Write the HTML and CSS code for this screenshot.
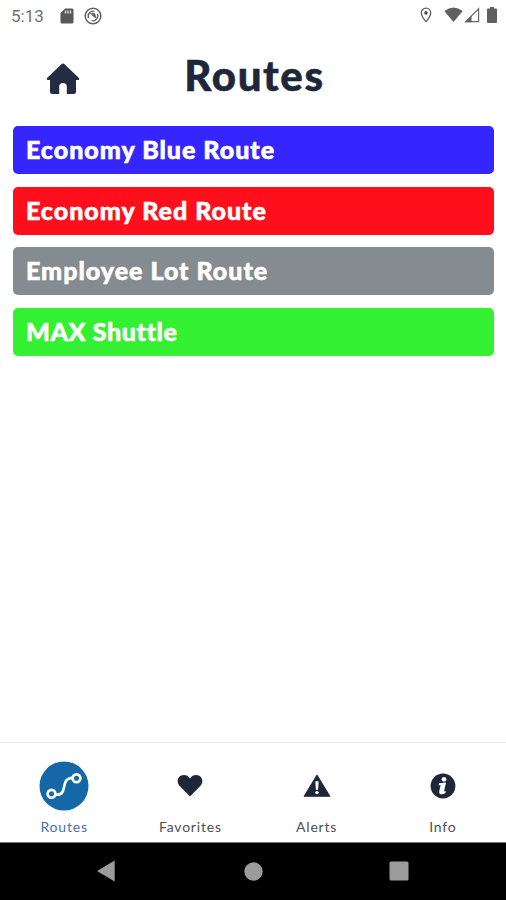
FILE: index.html
```html
<!DOCTYPE html>
<html lang="en">
<head>
    <meta charset="UTF-8">
    <meta name="viewport" content="width=device-width, initial-scale=1.0">
    <title>Routes</title>
    <link rel="stylesheet" href="styles.css">
</head>
<body>
    <!-- Status bar -->
    <div class="status-bar">
        <span class="clock">5:13</span>
        <svg class="sd-icon" width="14" height="16" viewBox="0 0 14 16">
            <path d="M5 0.5H12Q13.5 0.5 13.5 2V14Q13.5 15.5 12 15.5H2Q0.5 15.5 0.5 14V5Z" fill="#585858"/>
            <path d="M5.5 2.5V5.5M8 2.5V5.5M10.5 2.5V5.5" stroke="#ddd" stroke-width="1.4"/>
        </svg>
        <svg class="sync-icon" width="18" height="18" viewBox="0 0 18 18" fill="none" stroke="#606060">
            <circle cx="9" cy="9" r="7.8" stroke-width="1.5"/>
            <path d="M4.6 11A4.8 4.8 0 0 1 10.5 4.5M13.4 7A4.8 4.8 0 0 1 7.5 13.5" stroke-width="1.3"/>
            <path d="M6.2 6.2H10.6L12.4 11.6L9.6 9.4Z" fill="#606060" stroke-width="0.6"/>
        </svg>
        <div class="status-right">
            <svg width="12" height="16" viewBox="0 0 12 16">
                <path d="M6 1.2A4.7 4.7 0 0 0 1.3 5.9C1.3 9 6 14.6 6 14.6S10.7 9 10.7 5.9A4.7 4.7 0 0 0 6 1.2Z" fill="none" stroke="#606060" stroke-width="1.3"/>
                <circle cx="6" cy="5.9" r="1.8" fill="#505050"/>
            </svg>
            <svg class="wifi-icon" width="19" height="16" viewBox="0 0 19 16">
                <path d="M0.3 4Q9.5 -3 18.7 4L9.5 15Z" fill="#606060"/>
            </svg>
            <svg class="signal-icon" width="16" height="16" viewBox="0 0 16 16">
                <path d="M1.8 14.6L14.6 1.8V14.6Z" fill="none" stroke="#686868" stroke-width="1.2"/>
                <path d="M0.8 15.2L7.5 8.5V15.2Z" fill="#606060"/>
            </svg>
            <svg class="battery-icon" width="10" height="16" viewBox="0 0 10 16">
                <path d="M3 0H7V1.6H9Q10 1.6 10 2.6V15Q10 16 9 16H1Q0 16 0 15V2.6Q0 1.6 1 1.6H3Z" fill="#606060"/>
            </svg>
        </div>
    </div>

    <header>
        <svg class="home-icon" width="34" height="32" viewBox="0 0 34 32">
            <path d="M16 0.8Q17 0 18 0.8L33 15Q34 16.4 32.4 17H30V28.5Q30 31 27.5 31H20.8V23.5Q20.8 20 17 20T13.2 23.5V31H6.5Q4 31 4 28.5V17H1.6Q0 16.4 1 15Z" fill="#242c42"/>
        </svg>
        <h1>Routes</h1>
    </header>

    <main class="routes">
        <a class="route blue">Economy Blue Route</a>
        <a class="route red">Economy Red Route</a>
        <a class="route gray">Employee Lot Route</a>
        <a class="route green">MAX Shuttle</a>
    </main>

    <!-- Bottom tabs -->
    <nav class="tabs">
        <a class="tab active">
            <span class="tab-icon">
                <svg width="50" height="50" viewBox="0 0 50 50">
                    <circle cx="25" cy="25" r="24.5" fill="#1468a5"/>
                    <g fill="none" stroke="#fff" stroke-width="2.7">
                        <circle cx="12.5" cy="32.7" r="3.9"/>
                        <circle cx="37.5" cy="17.3" r="3.9"/>
                        <path d="M16.4 33.3C23 34.5 24 31 25 26.5C26.2 20.5 27 17 33.6 16.8"/>
                    </g>
                </svg>
            </span>
            <span class="tab-label">Routes</span>
        </a>
        <a class="tab">
            <span class="tab-icon">
                <svg width="26" height="24" viewBox="0 0 26 24">
                    <path d="M13 22.5L2.5 11.8C-1.5 7 1.5 1 6.7 1C9.5 1 11.6 2.2 13 4.4C14.4 2.2 16.5 1 19.3 1C24.5 1 27.5 7 23.5 11.8Z" fill="#1e263a"/>
                </svg>
            </span>
            <span class="tab-label">Favorites</span>
        </a>
        <a class="tab">
            <span class="tab-icon">
                <svg width="28" height="24" viewBox="0 0 28 24">
                    <path d="M14 1.2L26.7 22.2H1.3Z" fill="#1e263a" stroke="#1e263a" stroke-width="1.2" stroke-linejoin="round"/>
                    <path d="M12.3 7.2H15.7L15.1 15.8H12.9Z" fill="#fff"/>
                    <circle cx="14" cy="18.6" r="1.7" fill="#fff"/>
                </svg>
            </span>
            <span class="tab-label">Alerts</span>
        </a>
        <a class="tab">
            <span class="tab-icon">
                <svg width="26" height="26" viewBox="0 0 26 26">
                    <circle cx="13" cy="13" r="12.4" fill="#1e263a"/>
                    <circle cx="14" cy="6.3" r="2.4" fill="#fff"/>
                    <path d="M9 10.3L16 9.5L14 18.4L15.9 18.1L15.4 20Q12.6 21.9 10 21Q8.8 20 9.3 18L10.6 12.3L8.7 12.2Z" fill="#fff"/>
                </svg>
            </span>
            <span class="tab-label">Info</span>
        </a>
    </nav>

    <!-- Android system buttons -->
    <div class="system-nav">
        <svg width="20" height="22" viewBox="0 0 20 22"><path d="M0 11L17.7 0.5V21.5Z" fill="#9b9b9b"/></svg>
        <svg width="19" height="19" viewBox="0 0 19 19"><circle cx="9.5" cy="9.5" r="9.2" fill="#9b9b9b"/></svg>
        <svg width="20" height="20" viewBox="0 0 20 20"><rect x="0.5" y="0.5" width="19" height="19" rx="1.5" fill="#9b9b9b"/></svg>
    </div>
</body>
</html>
```
FILE: styles.css
```css
html, body {
    margin: 0;
    padding: 0;
    height: 100%;
    overflow: hidden;
}

body {
    display: flex;
    flex-direction: column;
    background-color: #fff;
    color: #1e263a;
    font-family: Lato, sans-serif;
}

svg {
    display: block;
    flex-shrink: 0;
}

/* Status bar */
.status-bar {
    display: flex;
    align-items: center;
    height: 31px;
    padding: 0 9px 0 11px;
}

.clock {
    width: 49px;
    font-family: Roboto, sans-serif;
    font-size: 17px;
    color: #707070;
}

.sync-icon {
    margin-left: 10px;
}

.status-right {
    display: flex;
    align-items: center;
    margin-left: auto;
    padding-bottom: 1px;
}

.wifi-icon {
    margin-left: 12px;
}

.signal-icon {
    margin-left: 1px;
}

.battery-icon {
    margin-left: 7px;
}

/* Title row */
header {
    display: grid;
    grid-template-columns: 1fr auto 1fr;
    align-items: center;
    height: 95px;
}

.home-icon {
    margin-left: 46px;
}

h1 {
    margin: 0;
    padding: 0 0 7px 3px;
    font-size: 42px;
    font-weight: 900;
    line-height: 1;
    letter-spacing: 1.6px;
    -webkit-text-stroke: 0.5px #1e263a;
}

/* Route list */
.routes {
    flex: 1;
    display: flex;
    flex-direction: column;
    gap: 12.5px;
    padding: 0 12px 0 13px;
}

.route {
    height: 48px;
    padding-left: 13px;
    border-radius: 5px;
    color: #fff;
    font-size: 25px;
    font-weight: 900;
    line-height: 47px;
    letter-spacing: 1px;
    -webkit-text-stroke: 0.6px #fff;
}

.blue {
    background-color: #3526ff;
}

.red {
    background-color: #ff0e1c;
}

.gray {
    background-color: #848c91;
}

.green {
    background-color: #33f033;
    letter-spacing: 0.6px;
}

/* Bottom tabs */
.tabs {
    display: grid;
    grid-template-columns: repeat(4, 1fr);
    height: 100px;
    padding-left: 1px;
    border-top: 1px solid #e9e9e9;
    box-sizing: border-box;
}

.tab {
    display: flex;
    flex-direction: column;
    align-items: center;
    padding-top: 18px;
}

.tab-icon {
    display: flex;
    align-items: center;
    height: 50px;
}

.tab-label {
    margin-top: 7px;
    font-size: 14px;
    line-height: 18px;
    letter-spacing: 0.8px;
    color: #505050;
}

.active .tab-label {
    color: #4470ab;
}

/* System buttons */
.system-nav {
    display: flex;
    align-items: center;
    justify-content: space-between;
    height: 58px;
    padding: 0 97px 1px;
    box-sizing: border-box;
    background-color: #000;
    border-top: 1px solid #777;
}
```
